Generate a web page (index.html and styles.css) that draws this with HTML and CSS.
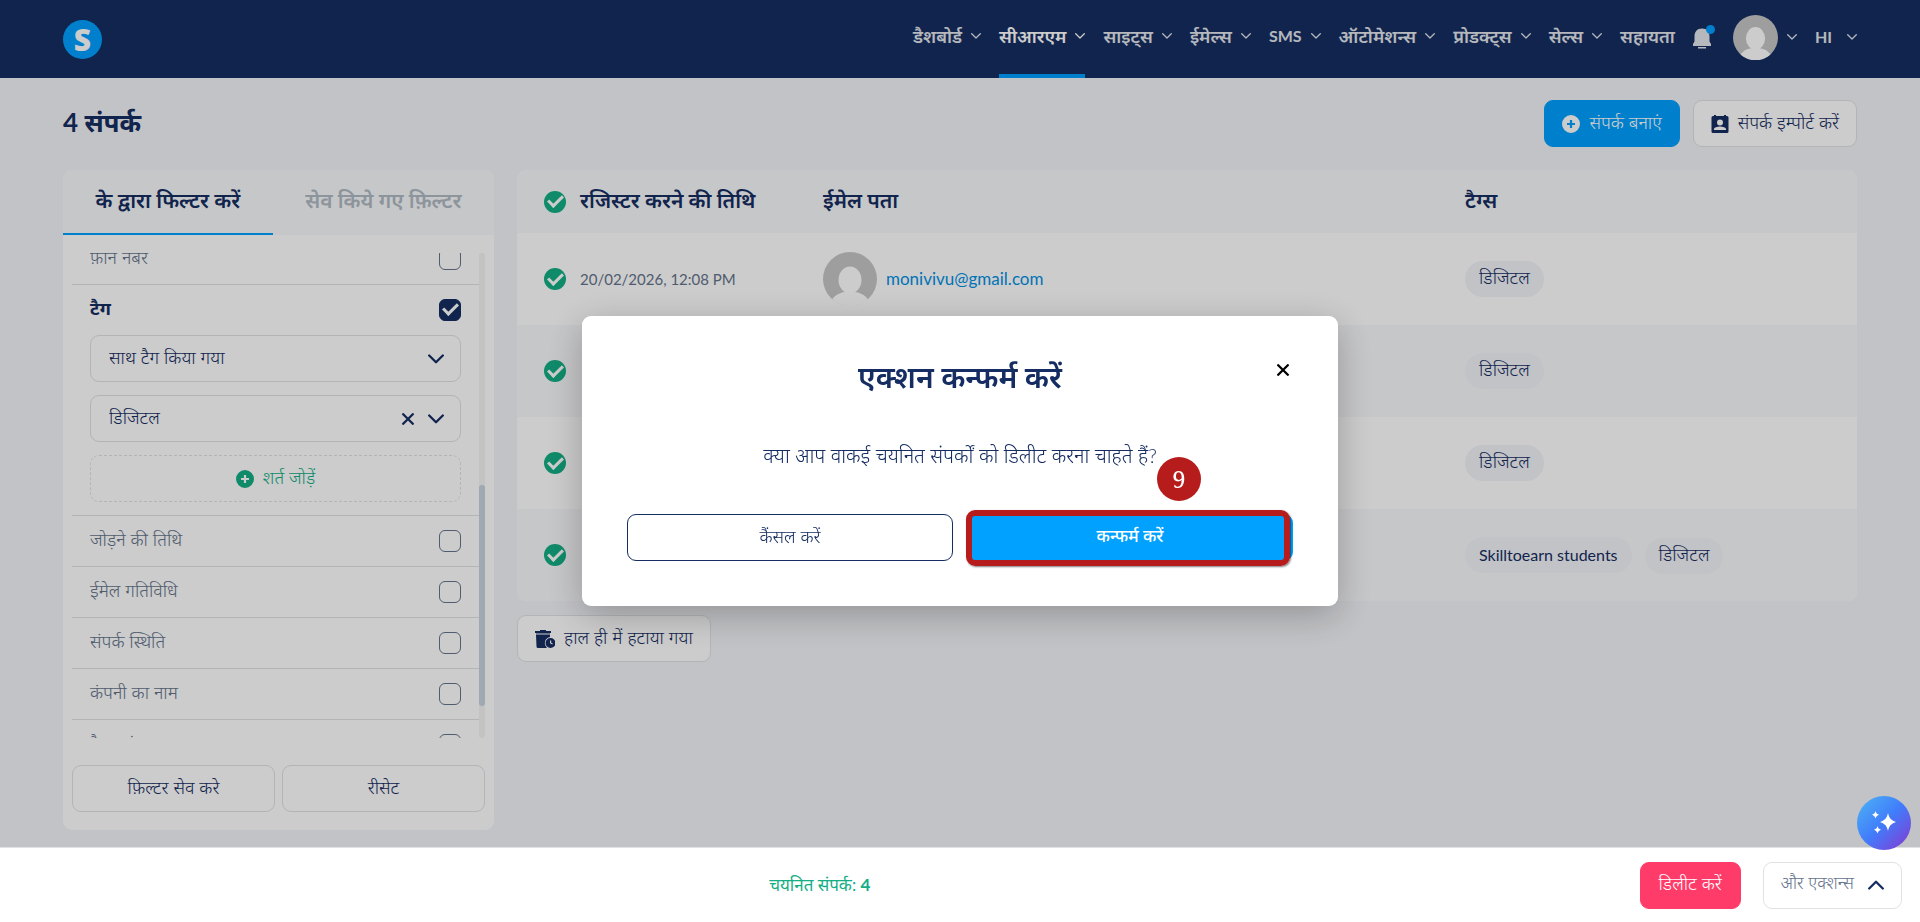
FILE: index.html
```html
<!DOCTYPE html>
<html lang="hi">
<head>
  <meta charset="UTF-8" />
  <meta name="viewport" content="width=device-width, initial-scale=1.0"/>
  <title>संपर्क</title>
  <link rel="stylesheet" href="styles.css">
</head>
<body>

<!-- Shared icons -->
<svg width="0" height="0" class="sprite">
  <symbol id="down" viewBox="0 0 10 6"><path d="M0.7 0.8 5 5 9.3 0.8" fill="none" stroke="currentColor" stroke-width="1.3" stroke-linecap="round" stroke-linejoin="round"/></symbol>
  <symbol id="chevron" viewBox="0 0 16 10"><path d="M1.200 1.500 8 8.300 14.800 1.500" fill="none" stroke="currentColor" stroke-width="2.300" stroke-linecap="round" stroke-linejoin="round"/></symbol>
  <symbol id="cross" viewBox="0 0 12 12"><path d="M1.200 1.200 10.800 10.800M10.800 1.200 1.200 10.800" fill="none" stroke="currentColor" stroke-width="2.300" stroke-linecap="round"/></symbol>
  <symbol id="plus" viewBox="0 0 18 18"><path fill-rule="evenodd" fill="currentColor" d="M9 0a9 9 0 1 0 0 18A9 9 0 0 0 9 0zm-1.100 5h2.200v2.900H13v2.200h-2.900V13H7.900v-2.900H5V7.900h2.900z"/></symbol>
  <symbol id="person" viewBox="0 0 54 54"><circle cx="27" cy="27" r="27" fill="#c6c6c6"/><ellipse cx="27" cy="28" rx="11.500" ry="13.500" fill="#fff"/><path d="M9 47.500C13 42 18 40.500 22 40h10c4 .5 9 2 13 7.500A27 27 0 0 1 9 47.500z" fill="#fff"/></symbol>
</svg>

<header class="topbar">
  <a href="#" class="logo">S</a>
  <nav class="nav">
    <a href="#">डैशबोर्ड <svg class="down"><use href="#down"/></svg></a>
    <a href="#" class="active">सीआरएम <svg class="down"><use href="#down"/></svg></a>
    <a href="#">साइट्स <svg class="down"><use href="#down"/></svg></a>
    <a href="#">ईमेल्स <svg class="down"><use href="#down"/></svg></a>
    <a href="#"><span class="latin">SMS</span> <svg class="down"><use href="#down"/></svg></a>
    <a href="#">ऑटोमेशन्स <svg class="down"><use href="#down"/></svg></a>
    <a href="#">प्रोडक्ट्स <svg class="down"><use href="#down"/></svg></a>
    <a href="#">सेल्स <svg class="down"><use href="#down"/></svg></a>
    <a href="#">सहायता</a>
  </nav>
  <button class="bell" aria-label="सूचनाएं">
    <svg width="22" height="24" viewBox="0 0 22 24">
      <path d="M9 3.500c5 0 7.500 3.500 7.500 8v5L18 19v2H0v-2l1.500-2.500v-5c0-4.500 2.500-8 7.500-8zM5 22h8v1.500H5z" fill="#e3e6ec"/>
      <circle cx="17.500" cy="4.500" r="4.500" fill="#00a1ff"/>
    </svg>
  </button>
  <button class="account" aria-label="अकाउंट"><svg class="account-pic"><use href="#person"/></svg><svg class="down"><use href="#down"/></svg></button>
  <button class="lang"><span class="latin">HI</span> <svg class="down"><use href="#down"/></svg></button>
</header>

<main class="page">
  <div class="page-head">
    <h1>4 संपर्क</h1>
    <button class="btn btn-blue"><svg class="icon"><use href="#plus"/></svg>संपर्क बनाएं</button>
    <button class="btn">
      <svg class="icon" viewBox="0 0 18 18"><path fill-rule="evenodd" fill="currentColor" d="M3 0h2v1h8V0h2v1h1a1.500 1.500 0 0 1 1.500 1.500v14A1.500 1.500 0 0 1 16 18H2a1.500 1.500 0 0 1-1.500-1.500v-14A1.500 1.500 0 0 1 2 1h1zM9 4.500a3 3 0 1 0 0 6 3 3 0 0 0 0-6zM3 15h12v-1c0-1.500-3.500-2.500-6-2.500S3 12.500 3 14z"/></svg>संपर्क इम्पोर्ट करें</button>
  </div>

  <div class="columns">
    <aside class="filters">
      <div class="tabs">
        <button class="tab selected">के द्वारा फिल्टर करें</button>
        <button class="tab">सेव किये गए फ़िल्टर</button>
      </div>
      <div class="scroll">
        <div class="list">
          <div class="row"><label for="phone">फ़ोन नंबर</label><input type="checkbox" id="phone" class="box"></div>
          <div class="group">
            <div class="row"><label for="tag">टैग</label><input type="checkbox" id="tag" class="box" checked></div>
            <div class="field">
              <select aria-label="शर्त"><option>साथ टैग किया गया</option></select>
              <div class="field-icons"><svg class="chevron"><use href="#chevron"/></svg></div>
            </div>
            <div class="field">
              <select aria-label="टैग"><option>डिजिटल</option></select>
              <div class="field-icons"><svg class="cross"><use href="#cross"/></svg><svg class="chevron"><use href="#chevron"/></svg></div>
            </div>
            <button class="btn btn-add"><svg class="icon"><use href="#plus"/></svg>शर्त जोड़ें</button>
          </div>
          <div class="row"><label for="added">जोड़ने की तिथि</label><input type="checkbox" id="added" class="box"></div>
          <div class="row"><label for="activity">ईमेल गतिविधि</label><input type="checkbox" id="activity" class="box"></div>
          <div class="row"><label for="status">संपर्क स्थिति</label><input type="checkbox" id="status" class="box"></div>
          <div class="row"><label for="company">कंपनी का नाम</label><input type="checkbox" id="company" class="box"></div>
          <div class="row"><label for="tax">टैक्स नंबर</label><input type="checkbox" id="tax" class="box"></div>
        </div>
        <div class="track"><div class="thumb"></div></div>
      </div>
      <div class="filter-actions">
        <button class="btn">फ़िल्टर सेव करे</button>
        <button class="btn">रीसेट</button>
      </div>
    </aside>

    <section class="results">
      <table>
        <thead>
          <tr>
            <th class="c-check"><input type="checkbox" class="dot" aria-label="सभी" checked></th>
            <th class="c-date">रजिस्टर करने की तिथि</th>
            <th class="c-mail">ईमेल पता</th>
            <th>टैग्स</th>
          </tr>
        </thead>
        <tbody>
          <tr>
            <td><input type="checkbox" class="dot" aria-label="1" checked></td>
            <td class="date">20/02/2026, 12:08 PM</td>
            <td><a href="#" class="mail"><svg class="mail-pic"><use href="#person"/></svg>monivivu@gmail.com</a></td>
            <td><span class="tag">डिजिटल</span></td>
          </tr>
          <tr>
            <td><input type="checkbox" class="dot" aria-label="2" checked></td>
            <td></td>
            <td></td>
            <td><span class="tag">डिजिटल</span></td>
          </tr>
          <tr>
            <td><input type="checkbox" class="dot" aria-label="3" checked></td>
            <td></td>
            <td></td>
            <td><span class="tag">डिजिटल</span></td>
          </tr>
          <tr>
            <td><input type="checkbox" class="dot" aria-label="4" checked></td>
            <td></td>
            <td></td>
            <td><span class="tag latin">Skilltoearn students</span><span class="tag">डिजिटल</span></td>
          </tr>
        </tbody>
      </table>
      <button class="btn">
        <svg class="trash" viewBox="0 0 20 18"><path fill="currentColor" d="M5 0h6v1h5v2H0V1h5zM1 5h14v2a6 6 0 0 0-4 9.500l1 1.500H3a1.500 1.500 0 0 1-1.500-1.500z"/><path fill="#8c97b1" d="M1 3h14v2H1z"/><path fill-rule="evenodd" fill="currentColor" d="M15.500 8a5 5 0 1 0 0 10 5 5 0 0 0 0-10zm-.5 2.500h1.200v2.200l1.600.8-.5 1-2.300-1.200z"/></svg>हाल ही में हटाया गया</button>
    </section>
  </div>
</main>

<!-- Confirm dialog -->
<div class="backdrop">
  <div class="modal" role="dialog" aria-labelledby="modalTitle">
    <button class="close" aria-label="बंद करें"><svg class="cross"><use href="#cross"/></svg></button>
    <h2 id="modalTitle">एक्शन कन्फर्म करें</h2>
    <p>क्या आप वाकई चयनित संपर्कों को डिलीट करना चाहते हैं?</p>
    <div class="modal-buttons">
      <button class="btn btn-outline">कैंसल करें</button>
      <div class="confirm">
        <button class="btn btn-blue">कन्फर्म करें</button>
        <span class="marker"></span>
        <span class="step">9</span>
      </div>
    </div>
  </div>
</div>

<footer class="actionbar">
  <p class="count">चयनित संपर्क: <b>4</b></p>
  <button class="btn btn-red">डिलीट करें</button>
  <button class="btn btn-more">और एक्शन्स <svg class="chevron up"><use href="#chevron"/></svg></button>
</footer>

<button class="assistant" aria-label="AI">
  <svg width="24" height="24" viewBox="0 0 24 24" fill="#fff">
    <path d="M16 2c1.200 5.300 2.700 6.800 8 9-5.300 2.200-6.800 3.700-8 9-1.200-5.300-2.700-6.800-8-9 5.300-2.200 6.800-3.700 8-9z"/>
    <path d="M3.500 0c.7 2.300 1.200 2.800 3.500 3.800-2.300 1-2.800 1.500-3.500 3.800C2.800 5.300 2.300 4.800 0 3.800 2.300 2.800 2.800 2.300 3.500 0zM5.500 15c.7 2.300 1.200 2.800 3.500 3.800-2.300 1-2.800 1.500-3.500 3.800-.7-2.300-1.200-2.800-3.500-3.800 2.300-1 2.800-1.500 3.500-3.800z"/>
  </svg>
</button>

</body>
</html>
```
FILE: styles.css
```css
* {
  box-sizing: border-box;
}

body {
  margin: 0;
  font-family: Lato, "Noto Sans Devanagari", "Noto Sans", sans-serif;
  font-size: 18px;
  font-weight: 300;
  line-height: 24px;
  background: #f3f4f8;
  color: #152d62;
}

button,
select {
  font: inherit;
  color: inherit;
  cursor: pointer;
}

a {
  color: inherit;
  text-decoration: none;
}

svg {
  display: block;
  flex: none;
}

.sprite {
  position: absolute;
}

.latin {
  font-size: 16px;
  font-weight: 700;
}

.down {
  width: 10px;
  height: 6px;
}

.icon {
  width: 18px;
  height: 18px;
}

.chevron {
  width: 16px;
  height: 10px;
}

.cross {
  width: 12px;
  height: 12px;
}

.up {
  transform: rotate(180deg);
}

/* Header */
.topbar {
  display: flex;
  align-items: center;
  height: 78px;
  padding: 0 63px;
  background: #152d62;
  color: #e3e6ec;
  font-weight: 600;
}

.logo {
  width: 39px;
  height: 39px;
  margin-right: auto;
  border-radius: 50%;
  background: #00a1ff;
  color: #fff;
  font-family: "Open Sans", "Noto Sans", sans-serif;
  font-size: 30px;
  font-weight: 800;
  line-height: 39px;
  text-align: center;
}

.nav {
  display: flex;
  gap: 18px;
  height: 78px;
}

.nav a {
  display: flex;
  align-items: center;
  gap: 9px;
  padding-top: 2px;
  padding-bottom: 4px;
  border-bottom: 4px solid transparent;
}

.nav a.active {
  color: #fff;
  border-bottom-color: #00a1ff;
}

.topbar button {
  display: flex;
  align-items: center;
  padding: 0 0 4px;
  border: 0;
  background: none;
}

.topbar .bell {
  margin: 0 18px;
}

.account {
  gap: 9px;
}

.account-pic {
  width: 45px;
  height: 45px;
}

.lang {
  gap: 15px;
  margin-left: 18px;
}

/* Buttons */
.btn {
  display: inline-flex;
  align-items: center;
  justify-content: center;
  gap: 9px;
  height: 47px;
  padding: 0 17px 4px;
  border: 1px solid #dfe2e4;
  border-radius: 9px;
  background: #fff;
}

.btn svg {
  margin-top: 4px;
}

.btn-blue {
  border-color: #00a1ff;
  background: #00a1ff;
  color: #fff;
}

.btn-red {
  padding-left: 18px;
  padding-right: 18px;
  border-color: #ff3c69;
  background: #ff3c69;
  color: #fff;
}

.btn-outline {
  border-color: #152d62;
}

/* Page */
.page {
  padding: 22px 63px 92px;
}

.page-head {
  display: flex;
  align-items: center;
  gap: 13px;
  margin-bottom: 23px;
}

h1 {
  margin: 0 auto 0 0;
  padding-bottom: 4px;
  font-size: 26px;
  line-height: 40px;
  font-weight: 700;
}

.columns {
  display: flex;
  align-items: flex-start;
  gap: 23px;
}

/* Filter panel */
.filters {
  flex: none;
  width: 431px;
  background: #fff;
  border-radius: 9px;
  overflow: hidden;
}

.tabs {
  display: flex;
  height: 65px;
  background: #f8f9fb;
}

.tab {
  flex: 1 0 auto;
  padding: 0 8px 4px;
  border: 0;
  border-bottom: 2px solid transparent;
  background: none;
  color: #b0b9c3;
  font-size: 21px;
  font-weight: 600;
}

.tab.selected {
  color: #152d62;
  border-bottom-color: #00a1ff;
}

.scroll {
  display: flex;
  height: 485px;
  margin: 18px 9px 27px;
  overflow: hidden;
}

.list {
  flex: 1;
  margin-top: -19px;
}

.row {
  display: flex;
  align-items: center;
  justify-content: space-between;
  height: 51px;
  padding: 0 18px;
  border-bottom: 1px solid #dfe2e4;
  color: #64748b;
}

.row label {
  padding-bottom: 4px;
}

.group {
  display: flex;
  flex-direction: column;
  gap: 13px;
  padding: 0 18px 13px;
  border-bottom: 1px solid #dfe2e4;
}

.group .row {
  height: 37px;
  padding: 12px 0 0;
  border: 0;
  color: #152d62;
  font-weight: 700;
}

.box {
  appearance: none;
  width: 22px;
  height: 22px;
  margin: 0;
  border: 1px solid #64748b;
  border-radius: 6px;
}

.box:checked {
  display: grid;
  place-items: center;
  border-color: #152d62;
  background: #152d62;
}

.box:checked::before,
.dot::before {
  content: "";
  width: 6px;
  height: 12px;
  border: solid #fff;
  border-width: 0 3px 3px 0;
  transform: translateY(-2px) rotate(45deg);
}

.field {
  position: relative;
}

.field select {
  appearance: none;
  display: block;
  width: 100%;
  height: 47px;
  padding: 0 18px 4px;
  border: 1px solid #dfe2e4;
  border-radius: 9px;
  background: #fff;
}

.field-icons {
  position: absolute;
  top: 0;
  bottom: 0;
  right: 17px;
  display: flex;
  align-items: center;
  gap: 14px;
  pointer-events: none;
}

.btn-add {
  border-style: dashed;
  color: #13ae85;
}

.track {
  width: 6px;
  border-radius: 3px;
  background: #f4f4f4;
}

.thumb {
  height: 221px;
  margin-top: 232px;
  border-radius: 3px;
  background: #c8d2de;
}

.filter-actions {
  display: flex;
  gap: 7px;
  padding: 0 9px 18px;
}

.filter-actions .btn {
  flex: 1;
}

/* Contacts table */
.results {
  flex: 1;
}

table {
  width: 100%;
  margin-bottom: 14px;
  border-collapse: collapse;
  table-layout: fixed;
  border-radius: 9px;
  overflow: hidden;
  background: #fff;
  text-align: left;
}

th {
  height: 63px;
  padding: 0 0 4px;
  background: #f8f9fb;
  font-size: 21px;
  font-weight: 600;
}

th:first-child {
  padding-bottom: 0;
}

td {
  height: 92px;
  padding: 0;
  color: #64748b;
}

.date {
  font-size: 15px;
  font-weight: 400;
}

tbody tr:nth-child(even) {
  background: #f8f9fb;
}

th:first-child,
td:first-child {
  padding-left: 27px;
}

.c-check {
  width: 63px;
}

.c-date {
  width: 243px;
}

.c-mail {
  width: 642px;
}

.dot {
  appearance: none;
  display: grid;
  place-items: center;
  width: 22px;
  height: 22px;
  margin: 0;
  border-radius: 50%;
  background: #13ae85;
}

.mail {
  display: flex;
  align-items: center;
  gap: 9px;
  color: #0090e5;
  font-size: 17px;
  font-weight: 400;
}

.mail-pic {
  width: 54px;
  height: 54px;
}

.tag {
  display: inline-block;
  margin-right: 13px;
  padding: 4px 14px 8px;
  border-radius: 18px;
  background: #f3f4f8;
  color: #152d62;
}

.tag.latin {
  padding: 6px 14px;
  font-weight: 400;
}

.trash {
  width: 20px;
  height: 18px;
}

/* Dialog */
.backdrop {
  position: fixed;
  inset: 0;
  display: flex;
  align-items: center;
  justify-content: center;
  background: rgba(0, 0, 0, 0.2);
  z-index: 10;
}

.modal {
  position: relative;
  width: 756px;
  padding: 36px 45px 45px;
  border-radius: 9px;
  background: #fff;
  box-shadow: 0 9px 36px rgba(0, 0, 0, 0.25);
  text-align: center;
}

.modal h2 {
  margin: 0 0 43px;
  font-size: 30px;
  line-height: 48px;
  font-weight: 600;
}

.modal p {
  margin: 0 0 47px;
  font-size: 20px;
}

.close {
  position: absolute;
  top: 42px;
  right: 43px;
  padding: 6px;
  border: 0;
  background: none;
  color: #000;
}

.modal-buttons {
  display: grid;
  grid-template-columns: 1fr 1fr;
  gap: 14px;
}

.confirm {
  position: relative;
}

.confirm .btn {
  width: 100%;
  font-size: 17px;
  font-weight: 500;
}

.marker {
  position: absolute;
  inset: -4px 3px -5px -1px;
  border: 6px solid #b71c1c;
  border-radius: 9px;
  box-shadow: 1px 1px 2px rgba(0, 0, 0, 0.5);
}

.step {
  position: absolute;
  top: -57px;
  left: 190px;
  width: 44px;
  height: 44px;
  border-radius: 50%;
  background: #b71c1c;
  color: #fff;
  font-family: "Noto Serif", "Liberation Serif", serif;
  font-size: 24px;
  font-weight: 400;
  line-height: 44px;
}

/* Bottom bar */
.actionbar {
  position: fixed;
  left: 0;
  right: 0;
  bottom: 0;
  display: flex;
  align-items: center;
  height: 75px;
  padding-right: 18px;
  border-top: 1px solid #dfe2e4;
  background: #fff;
  z-index: 20;
}

.count {
  flex: 1;
  margin: 0;
  color: #13ae85;
  font-size: 17px;
  font-weight: 400;
  text-align: center;
}

.count b {
  font-weight: 700;
}

.btn-more {
  gap: 14px;
  margin-left: 22px;
  font-size: 17px;
  color: #64748b;
}

.btn-more .chevron {
  color: #152d62;
}

.assistant {
  position: fixed;
  right: 9px;
  bottom: 72px;
  display: flex;
  align-items: center;
  justify-content: center;
  width: 54px;
  height: 54px;
  padding: 0;
  border: 0;
  border-radius: 50%;
  background: linear-gradient(135deg, #4aaaf5 10%, #417cfb 50%, #7a44d8 90%);
  z-index: 30;
}
```
